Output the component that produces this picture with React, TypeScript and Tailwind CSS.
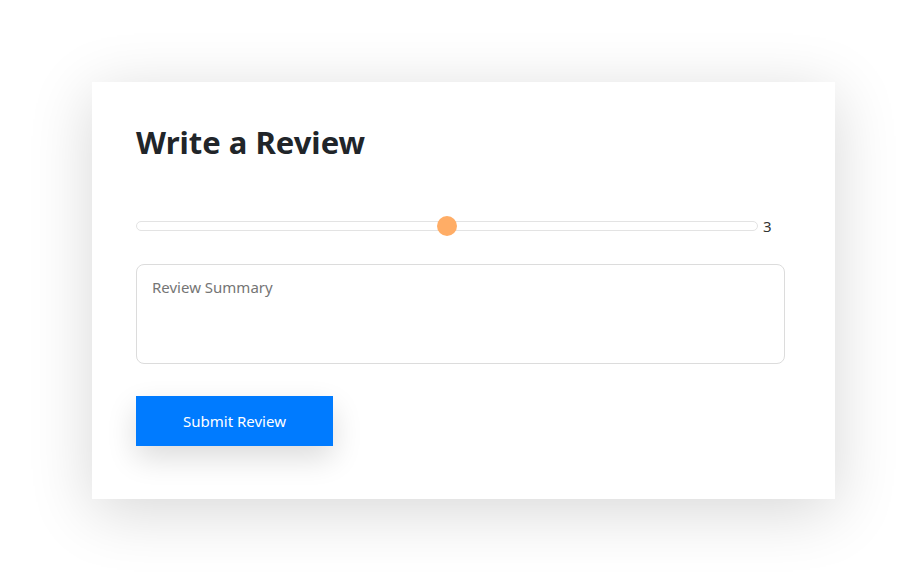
export default function App() {
  const value = 3;
  const pct = ((value - 1) / 4) * 100;

  return (
    <div
      className="min-h-[582px] w-full bg-white pt-[82px] pl-[92px]"
      style={{ fontFamily: '"Noto Sans", "Open Sans", sans-serif' }}
    >
      <div className="w-[743px] h-[417px] bg-white px-[44px] pt-[40px] shadow-[0_12px_60px_rgba(0,0,0,0.16)]">
        {/* Title */}
        <h1 className="text-[31px] font-bold leading-[40px] text-[#212529]">Write a Review</h1>

        {/* Rating slider */}
        <div className="mt-[53px] flex items-center h-[22px]">
          <div className="relative w-[622px] h-[10px] rounded-full border border-[#e3e3e3] bg-white">
            <div
              className="absolute top-1/2 w-[20px] h-[20px] -ml-[10px] -translate-y-1/2 rounded-full bg-[#ffad66]"
              style={{ left: `${pct}%` }}
            />
          </div>
          <span className="ml-[5px] text-[15px] text-[#333]">{value}</span>
        </div>

        {/* Summary */}
        <textarea
          placeholder="Review Summary"
          className="mt-[27px] block w-[649px] h-[100px] resize-none rounded-[8px] border border-[#dcdcdc] px-[15px] py-[11px] text-[15px] text-[#333] placeholder:text-[#757575] outline-none"
        />

        {/* Submit */}
        <button className="mt-[32px] w-[197px] h-[50px] bg-[#007bff] text-white text-[15px] shadow-[0_12px_30px_rgba(0,0,0,0.14)]">
          Submit Review
        </button>
      </div>
    </div>
  );
}
